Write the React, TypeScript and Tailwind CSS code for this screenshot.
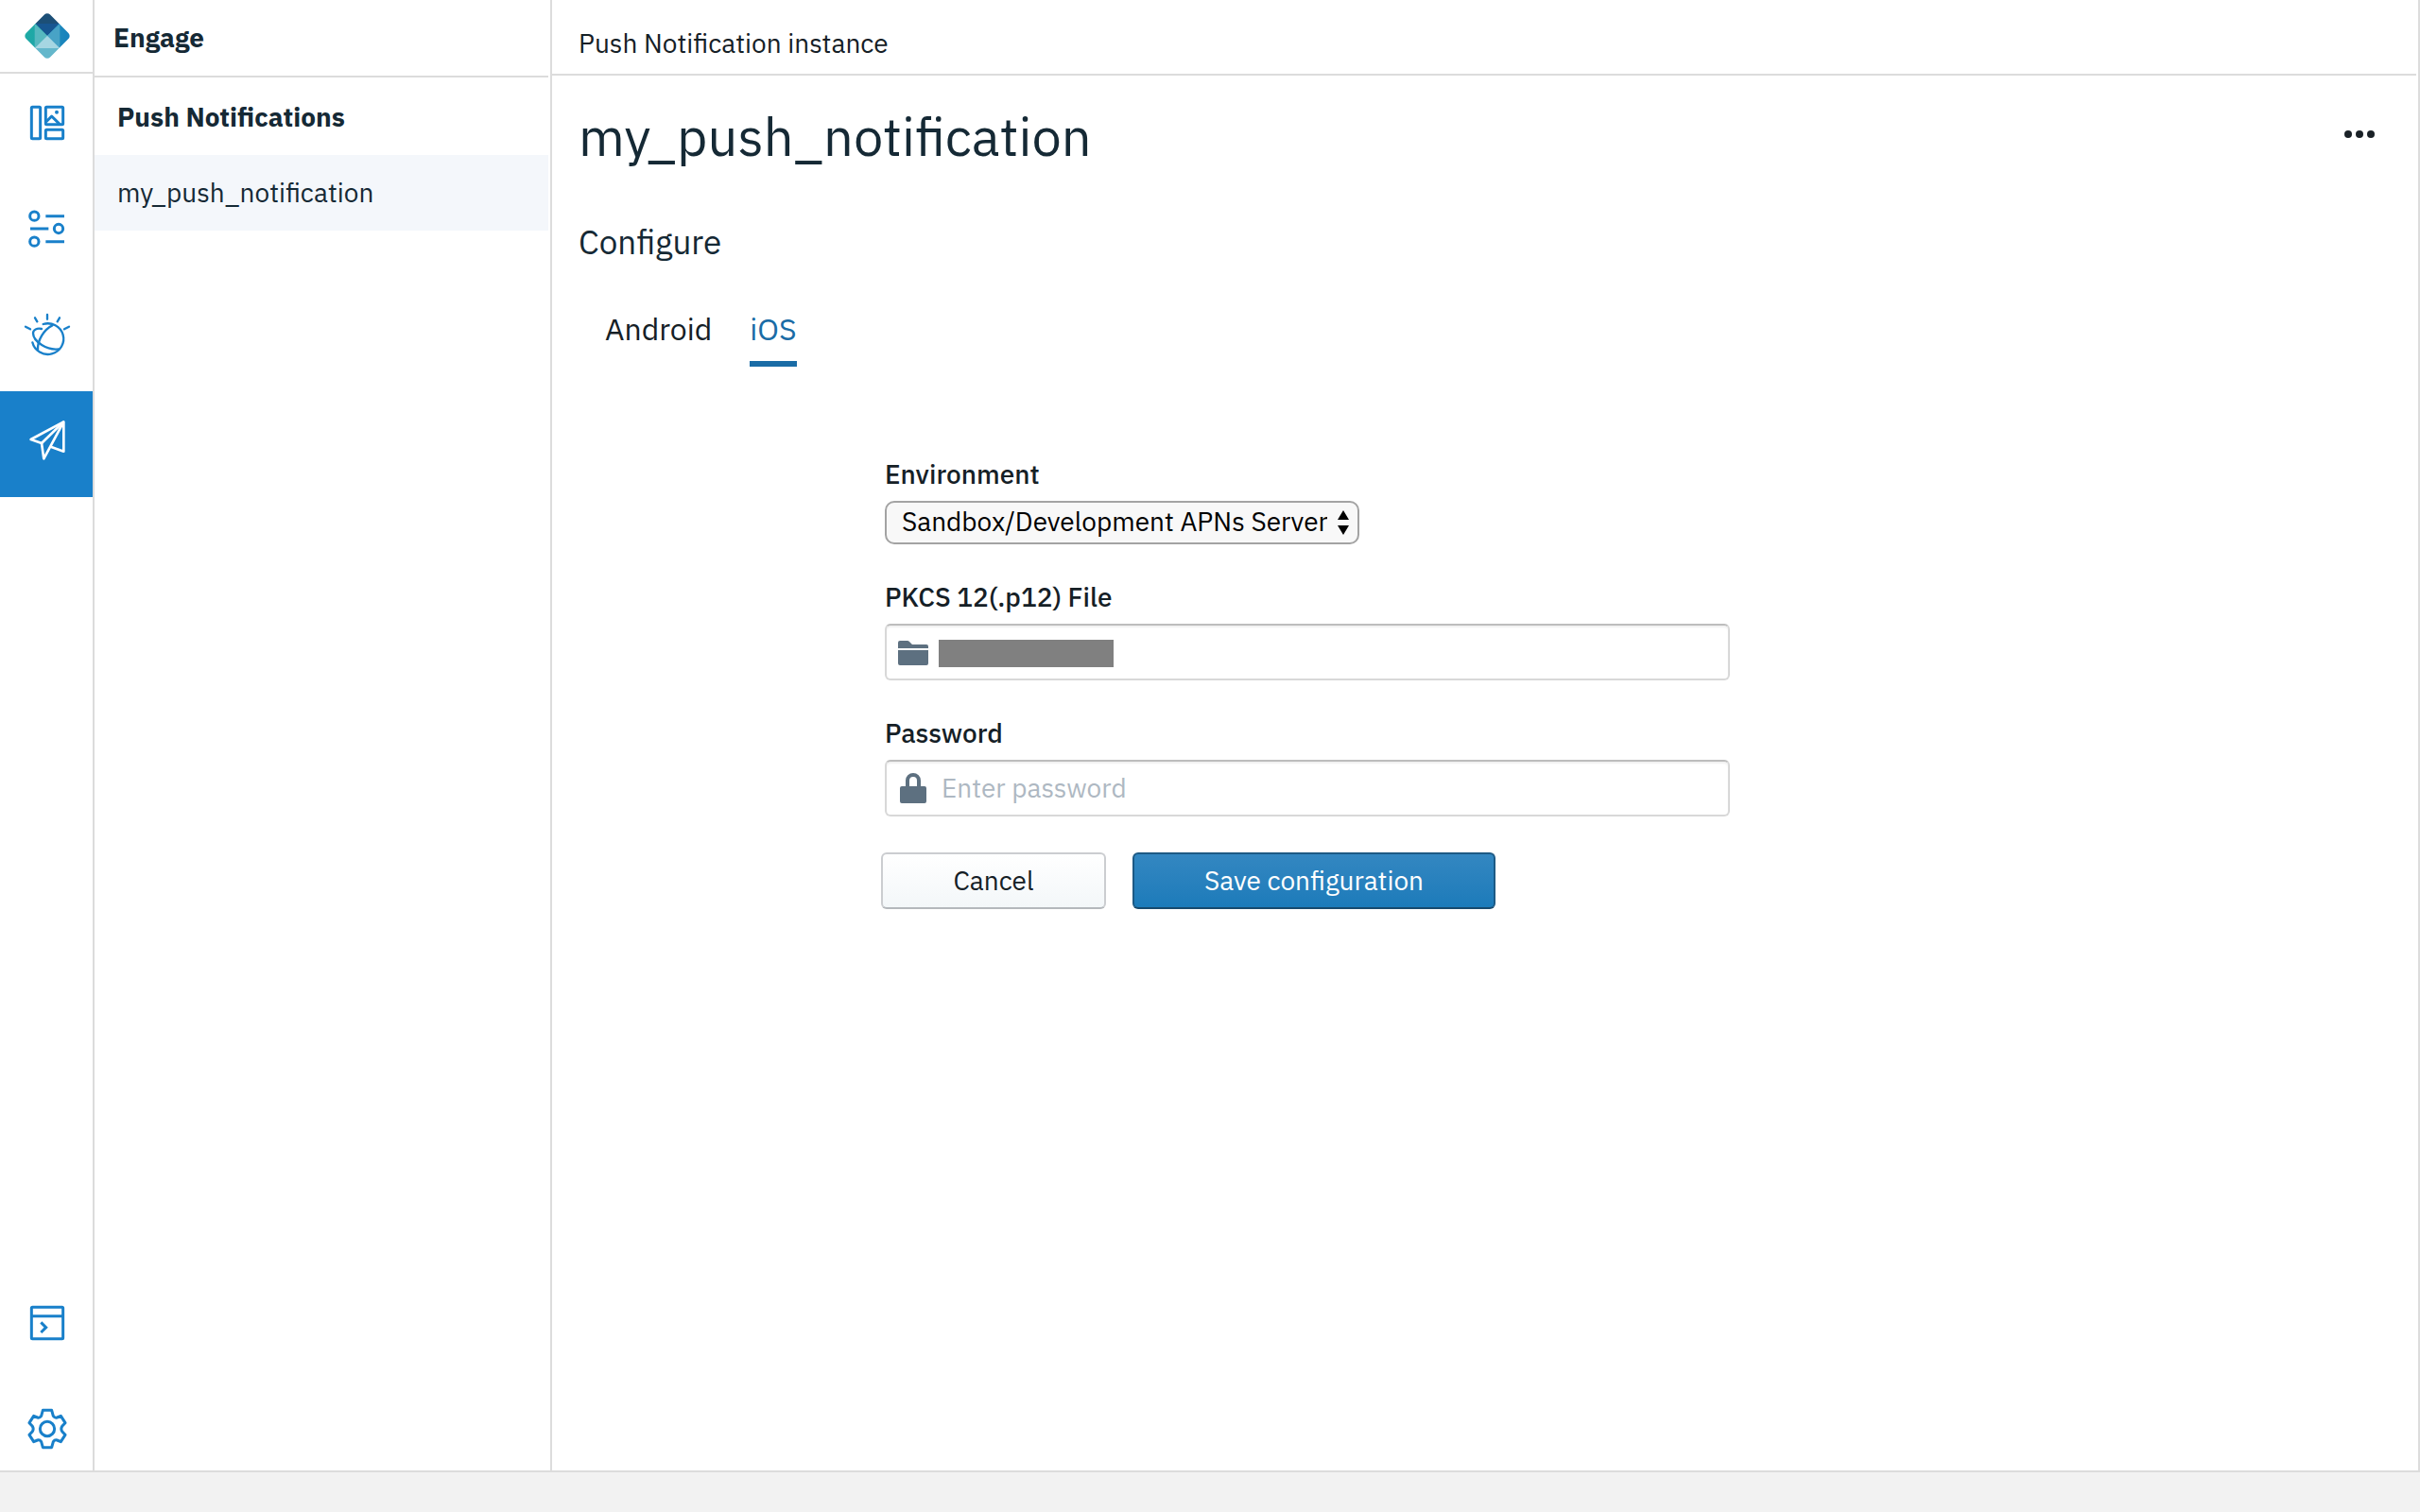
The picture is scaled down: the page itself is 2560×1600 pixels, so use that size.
import React from "react";

type IconProps = { viewBox: string; children: React.ReactNode };

function RailIcon({ viewBox, children }: IconProps) {
  return (
    <svg
      className="size-14"
      viewBox={viewBox}
      fill="none"
      stroke="currentColor"
      strokeWidth={9}
      strokeLinejoin="round"
      aria-hidden="true"
    >
      {children}
    </svg>
  );
}

function Logo() {
  return (
    <svg className="size-14" viewBox="66 30 168 168" aria-hidden="true">
      <defs>
        <clipPath id="gem">
          <rect x="96" y="60" width="108" height="108" rx="13" transform="rotate(45 150 114)" />
        </clipPath>
        <linearGradient id="gemLeft" x1="0" y1="0" x2="1" y2="1">
          <stop offset="0" stopColor="#1fb09f" />
          <stop offset="1" stopColor="#1e9fae" />
        </linearGradient>
        <linearGradient id="gemRight" x1="0" y1="0" x2="1" y2="0">
          <stop offset="0" stopColor="#2390bb" />
          <stop offset="1" stopColor="#127dbd" />
        </linearGradient>
      </defs>
      <g clipPath="url(#gem)">
        <path d="M60 20H240L150 114Z" fill="#1c4f77" />
        <path d="M110 75H190L150 114Z" fill="#175691" />
        <path d="M60 20V208L150 114Z" fill="url(#gemLeft)" />
        <path d="M110 75V153L150 114Z" fill="#57b8bf" />
        <path d="M240 20V208L150 114Z" fill="url(#gemRight)" />
        <path d="M190 75V153L150 114Z" fill="#48a3c6" />
        <path d="M60 208H240L150 114Z" fill="#64b7cb" />
        <path d="M110 153H190L150 114Z" fill="#a6d6e2" />
      </g>
    </svg>
  );
}

const railTop = [
  {
    name: "Dashboard",
    active: false,
    icon: (
      <RailIcon viewBox="66 306 168 168">
        <rect x="100" y="340" width="28" height="100" rx="3" />
        <rect x="145" y="340" width="55" height="55" rx="3" />
        <rect x="145" y="412" width="55" height="28" rx="3" />
        <path d="M146 387L164 369L190 395" />
        <circle cx="180" cy="356" r="6" fill="currentColor" stroke="none" />
      </RailIcon>
    ),
  },
  {
    name: "Services",
    active: false,
    icon: (
      <RailIcon viewBox="66 642 168 168">
        <circle cx="109" cy="686" r="14" />
        <path d="M145 686H204M96 726H154M145 767H204" />
        <circle cx="186" cy="726" r="14" />
        <circle cx="109" cy="767" r="14" />
      </RailIcon>
    ),
  },
  {
    name: "Watson",
    active: false,
    icon: (
      <RailIcon viewBox="66 198 168 168">
        <g strokeWidth={7} strokeLinecap="round">
          <path d="M150 219V233M111 229L118 241M189 229L182 241M81 257L96 265M219 257L204 265" />
          <path d="M137 249A50 49 0 1 1 103 307" />
          <path d="M132 264C118 261 105 266 105 278C106 305 150 333 186 328" />
          <path d="M166 253C140 266 118 300 120 332" />
        </g>
      </RailIcon>
    ),
  },
  {
    name: "Engage",
    active: true,
    icon: (
      <RailIcon viewBox="66 534 168 168">
        <g strokeWidth={8}>
          <path d="M202 559L98 615L132 627L139 676L202 559V653L161 638" />
          <path d="M202 559L132 627" />
        </g>
      </RailIcon>
    ),
  },
];

const railBottom = [
  {
    name: "Console",
    icon: (
      <RailIcon viewBox="66 66 168 168">
        <rect x="100" y="100" width="100" height="100" rx="3" />
        <path d="M100 128H200" />
        <path d="M130 148L146 164L130 180" strokeLinejoin="miter" />
      </RailIcon>
    ),
  },
  {
    name: "Settings",
    icon: (
      <RailIcon viewBox="66 402 168 168">
        <circle cx="150" cy="486" r="23" />
        <path d="M136 427H164L169 445Q174 452 181 450L193 445L207 467L197 478Q192 486 197 494L207 505L193 527L181 522Q174 520 169 527L164 545H136L131 527Q126 520 119 522L107 527L93 505L103 494Q108 486 103 478L93 467L107 445L119 450Q126 452 131 445Z" />
      </RailIcon>
    ),
  },
];

const fieldBox =
  "flex h-15 w-full items-center rounded-md border-2 border-[#d8d8d8] border-t-[#bdbdbd] bg-white px-3 shadow-[inset_0_2px_2px_rgba(0,0,0,0.06)]";
const labelText = "mb-2.5 block leading-9 font-medium";

export default function App() {
  return (
    <div className="flex min-h-screen flex-col bg-[#f2f2f2] text-[28px] text-[#152026] [font-family:'IBM_Plex_Sans',Roboto,sans-serif]">
      <div className="flex flex-1 border-r-2 border-b-2 border-[#dcdcdc] bg-white">
        <nav
          aria-label="Main"
          className="flex w-25 shrink-0 flex-col border-r-2 border-[#dcdcdc] text-[#1980ca]"
        >
          <a
            href="#home"
            aria-label="Home"
            className="flex h-19.5 items-center border-b-2 border-[#dcdcdc] pl-5.5"
          >
            <Logo />
          </a>
          {railTop.map((item) => (
            <a
              key={item.name}
              href={"#" + item.name.toLowerCase()}
              aria-label={item.name}
              className={
                item.active
                  ? "flex h-28 items-start bg-[#1980ca] pt-6 pl-5.5 text-white"
                  : "flex h-28 items-start pt-6 pl-5.5"
              }
            >
              {item.icon}
            </a>
          ))}
          <div className="mt-auto pb-4">
            {railBottom.map((item, i) => (
              <a
                key={item.name}
                href={"#" + item.name.toLowerCase()}
                aria-label={item.name}
                className={i === 0 ? "flex h-28 items-start pl-5.5" : "flex items-start pl-5.5"}
              >
                {item.icon}
              </a>
            ))}
          </div>
        </nav>

        <aside className="w-121 shrink-0 border-r-2 border-[#dcdcdc] pr-0.5 text-[#152935]">
          <h2 className="border-b-2 border-[#dcdcdc] pl-5 leading-[80px] font-bold">Engage</h2>
          <h3 className="pt-0.5 pl-6 leading-[80px] font-bold">Push Notifications</h3>
          <a href="#my_push_notification" className="block bg-[#f4f7fb] pl-6 leading-[80px]">
            my_push_notification
          </a>
        </aside>

        <main className="min-w-0 flex-1 pr-0.5">
          <header className="border-b-2 border-[#dcdcdc] pt-3.5 pl-7 leading-16">
            Push Notification instance
          </header>

          <div className="flex items-start justify-between pt-7 pr-10 pl-7">
            <h1 className="text-[56px] leading-[72px] text-[#152935]">my_push_notification</h1>
            <button type="button" aria-label="More actions" className="mt-3.5 p-1">
              <svg className="h-8 w-8" viewBox="0 0 32 32" fill="#1a2127" aria-hidden="true">
                <circle cx="4" cy="16" r="4" />
                <circle cx="16" cy="16" r="4" />
                <circle cx="28" cy="16" r="4" />
              </svg>
            </button>
          </div>

          <h2 className="pt-13 pl-7 text-[35px] leading-12 text-[#152935]">Configure</h2>

          <div role="tablist" className="flex gap-10 pt-12 pl-14 text-[32px] leading-10">
            <button type="button" role="tab" aria-selected="false" className="border-b-6 border-transparent pb-3.5">
              Android
            </button>
            <button
              type="button"
              role="tab"
              aria-selected="true"
              className="border-b-6 border-[#1a6ca6] pb-3.5 text-[#1a6ca6]"
            >
              iOS
            </button>
          </div>

          <form className="mt-24 ml-88 flex max-w-[894px] flex-col gap-9.5" onSubmit={(e) => e.preventDefault()}>
            <div>
              <label htmlFor="environment" className={labelText}>
                Environment
              </label>
              <div className="relative w-fit">
                <select
                  id="environment"
                  className="h-11.5 w-[502px] appearance-none rounded-[10px] border-2 border-[#a3a3a3] bg-[#f8f8f8] pr-8 pb-0.5 pl-4 leading-9 text-black"
                >
                  <option>Sandbox/Development APNs Server</option>
                  <option>Production APNs Server</option>
                </select>
                <svg
                  className="pointer-events-none absolute top-2.5 right-2.5 h-6.5 w-3.5"
                  viewBox="0 0 14 26"
                  aria-hidden="true"
                >
                  <path d="M7 0L13 10H1ZM1 16H13L7 26Z" fill="#000" />
                </svg>
              </div>
            </div>

            <div>
              <label htmlFor="certificate" className={labelText}>
                PKCS 12(.p12) File
              </label>
              <div className={fieldBox + " pt-0.5"}>
                <svg className="h-6.5 w-8 shrink-0" viewBox="0 0 32 26" fill="#5d7080" aria-hidden="true">
                  <path d="M0 8V2Q0 0 2 0H10Q11 0 12 1L15 4H30Q32 4 32 6V8ZM0 10H32V24Q32 26 30 26H2Q0 26 0 24Z" />
                </svg>
                <span className="ml-[11px] h-[29px] w-[185px] bg-[#808080]" />
                <input id="certificate" type="file" accept=".p12" className="sr-only" />
              </div>
            </div>

            <div>
              <label htmlFor="password" className={labelText}>
                Password
              </label>
              <div className={fieldBox}>
                <svg className="h-8 w-8 shrink-0" viewBox="0 0 32 32" fill="#5d7080" aria-hidden="true">
                  <path
                    fillRule="evenodd"
                    d="M8 14V8A8 8 0 0 1 24 8V14H28Q30 14 30 16V30Q30 32 28 32H4Q2 32 2 30V16Q2 14 4 14ZM12 14H20V8A4 4 0 0 0 12 8Z"
                  />
                </svg>
                <input
                  id="password"
                  type="password"
                  placeholder="Enter password"
                  className="ml-3.5 min-w-0 flex-1 bg-transparent outline-none placeholder:text-[#aeb8c2]"
                />
              </div>
            </div>

            <div className="-ml-1 flex gap-7">
              <button
                type="button"
                className="h-15 w-[238px] rounded-md border-2 border-[#cbcdd0] border-b-[#b4b8bc] bg-linear-to-b from-white to-[#f3f7f9]"
              >
                Cancel
              </button>
              <button
                type="submit"
                className="h-15 w-96 rounded-md border-2 border-[#1d5a85] border-b-[#174a6e] bg-linear-to-b from-[#3387c1] to-[#1c7bba] text-white"
              >
                Save configuration
              </button>
            </div>
          </form>
        </main>
      </div>
      <footer className="h-10.5" />
    </div>
  );
}
